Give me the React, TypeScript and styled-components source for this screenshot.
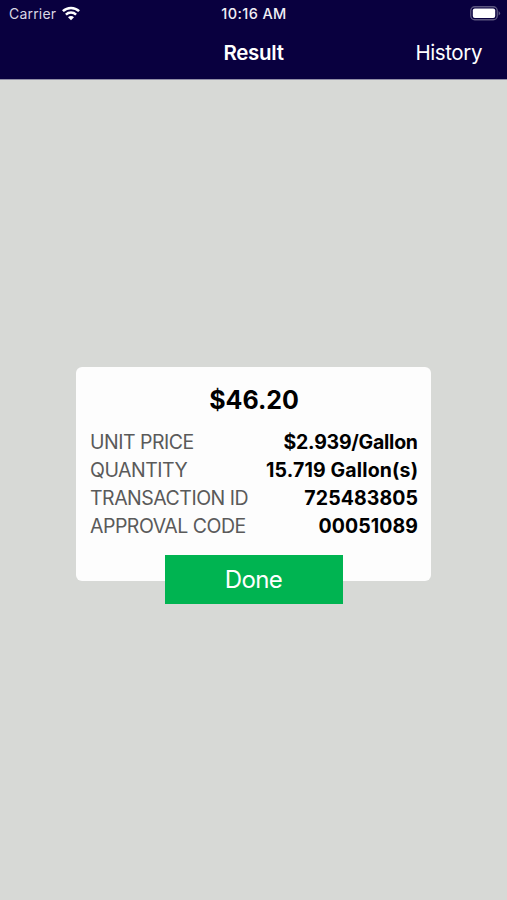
import React from "react";
import styled, { createGlobalStyle } from "styled-components";

const GlobalStyle = createGlobalStyle`
  * { box-sizing: border-box; }
  body { margin: 0; font-family: Inter, sans-serif; }
`;

const Screen = styled.div`
  height: 900px;
  display: flex;
  flex-direction: column;
  background: #d7d9d6;
`;

const Header = styled.header`
  height: 80px;
  border-bottom: 1px solid #908da6;
  background: #09003f;
  color: #fff;
`;

const StatusBar = styled.div`
  display: grid;
  grid-template-columns: 1fr auto 1fr;
  align-items: center;
  height: 27px;
  padding: 0 6px 0 9px;
  font-size: 14px;
`;

const Carrier = styled.div`
  display: flex;
  align-items: center;
  gap: 6px;
  letter-spacing: 0.2px;
  color: #d9d7e4;
`;

const Time = styled.div`
  margin-right: 2px;
  font-weight: 500;
  font-size: 14.5px;
  letter-spacing: 0.4px;
  color: #f0eff5;
`;

const Battery = styled.svg`
  justify-self: end;
`;

const NavBar = styled.nav`
  display: grid;
  grid-template-columns: 1fr auto 1fr;
  align-items: center;
  height: 50px;
  padding: 0 25px;
`;

const Title = styled.h1`
  grid-column: 2;
  margin: 0;
  font-size: 20.5px;
  font-weight: 600;
  letter-spacing: -0.3px;
`;

const NavLink = styled.span`
  justify-self: end;
  font-size: 20.5px;
  letter-spacing: -0.4px;
`;

const Content = styled.main`
  display: flex;
  flex-direction: column;
  align-items: center;
  padding-top: 287px;
`;

const Card = styled.section`
  width: 355px;
  height: 214px;
  padding: 18px 13px 0 14px;
  border-radius: 6px;
  background: #fdfdfd;
`;

const Amount = styled.div`
  height: 30px;
  line-height: 30px;
  text-align: center;
  font-size: 25px;
  font-weight: 700;
  color: #000;
`;

const Details = styled.dl`
  margin: 13px 0 0;
`;

const Row = styled.div`
  display: flex;
  justify-content: space-between;
  height: 28.1px;
  line-height: 28px;
`;

const Label = styled.dt`
  white-space: nowrap;
  font-size: 19.5px;
  letter-spacing: -0.5px;
  color: #5a5a5a;
`;

const Value = styled.dd<{ $tracking: number }>`
  margin: 0 ${(p) => -p.$tracking}px 0 0;
  font-size: 19.5px;
  font-weight: 700;
  letter-spacing: ${(p) => p.$tracking}px;
  color: #000;
`;

const DoneButton = styled.button`
  width: 178px;
  height: 49px;
  margin-top: -26px;
  padding: 0;
  border: 0;
  background: #00b451;
  color: #fff;
  font: 400 24px/49px Inter, sans-serif;
  letter-spacing: -0.6px;
`;

const rows = [
  { label: "UNIT PRICE", value: "$2.939/Gallon", tracking: -0.25 },
  { label: "QUANTITY", value: "15.719 Gallon(s)", tracking: 0.15 },
  { label: "TRANSACTION ID", value: "725483805", tracking: 0.1 },
  { label: "APPROVAL CODE", value: "00051089", tracking: 0.1 },
];

export default function App() {
  return (
    <Screen>
      <GlobalStyle />
      <Header>
        <StatusBar>
          <Carrier>
            Carrier
            <svg width="18" height="15" viewBox="0 0 18 15" fill="none" stroke="#fff" strokeWidth="2.5">
              <path d="M.9 5.2a11.6 11.6 0 0 1 16.2 0M3.9 8.6a7.4 7.4 0 0 1 10.2 0" />
              <path d="M9 14.2 6 11.2a4.2 4.2 0 0 1 6 0Z" fill="#fff" stroke="none" />
            </svg>
          </Carrier>
          <Time>10:16 AM</Time>
          <Battery width="31" height="15" viewBox="0 0 31 15">
            <rect x=".75" y=".75" width="26.5" height="13" rx="4" fill="none" stroke="#5d5780" strokeWidth="1.3" />
            <rect x="2.8" y="2.5" width="22.4" height="9.5" rx="2" fill="#fff" />
            <path d="M28.6 5q3 2.3 0 4.6Z" fill="#5d5780" />
          </Battery>
        </StatusBar>
        <NavBar>
          <Title>Result</Title>
          <NavLink>History</NavLink>
        </NavBar>
      </Header>
      <Content>
        <Card>
          <Amount>$46.20</Amount>
          <Details>
            {rows.map((row) => (
              <Row key={row.label}>
                <Label>{row.label}</Label>
                <Value $tracking={row.tracking}>{row.value}</Value>
              </Row>
            ))}
          </Details>
        </Card>
        <DoneButton>Done</DoneButton>
      </Content>
    </Screen>
  );
}
